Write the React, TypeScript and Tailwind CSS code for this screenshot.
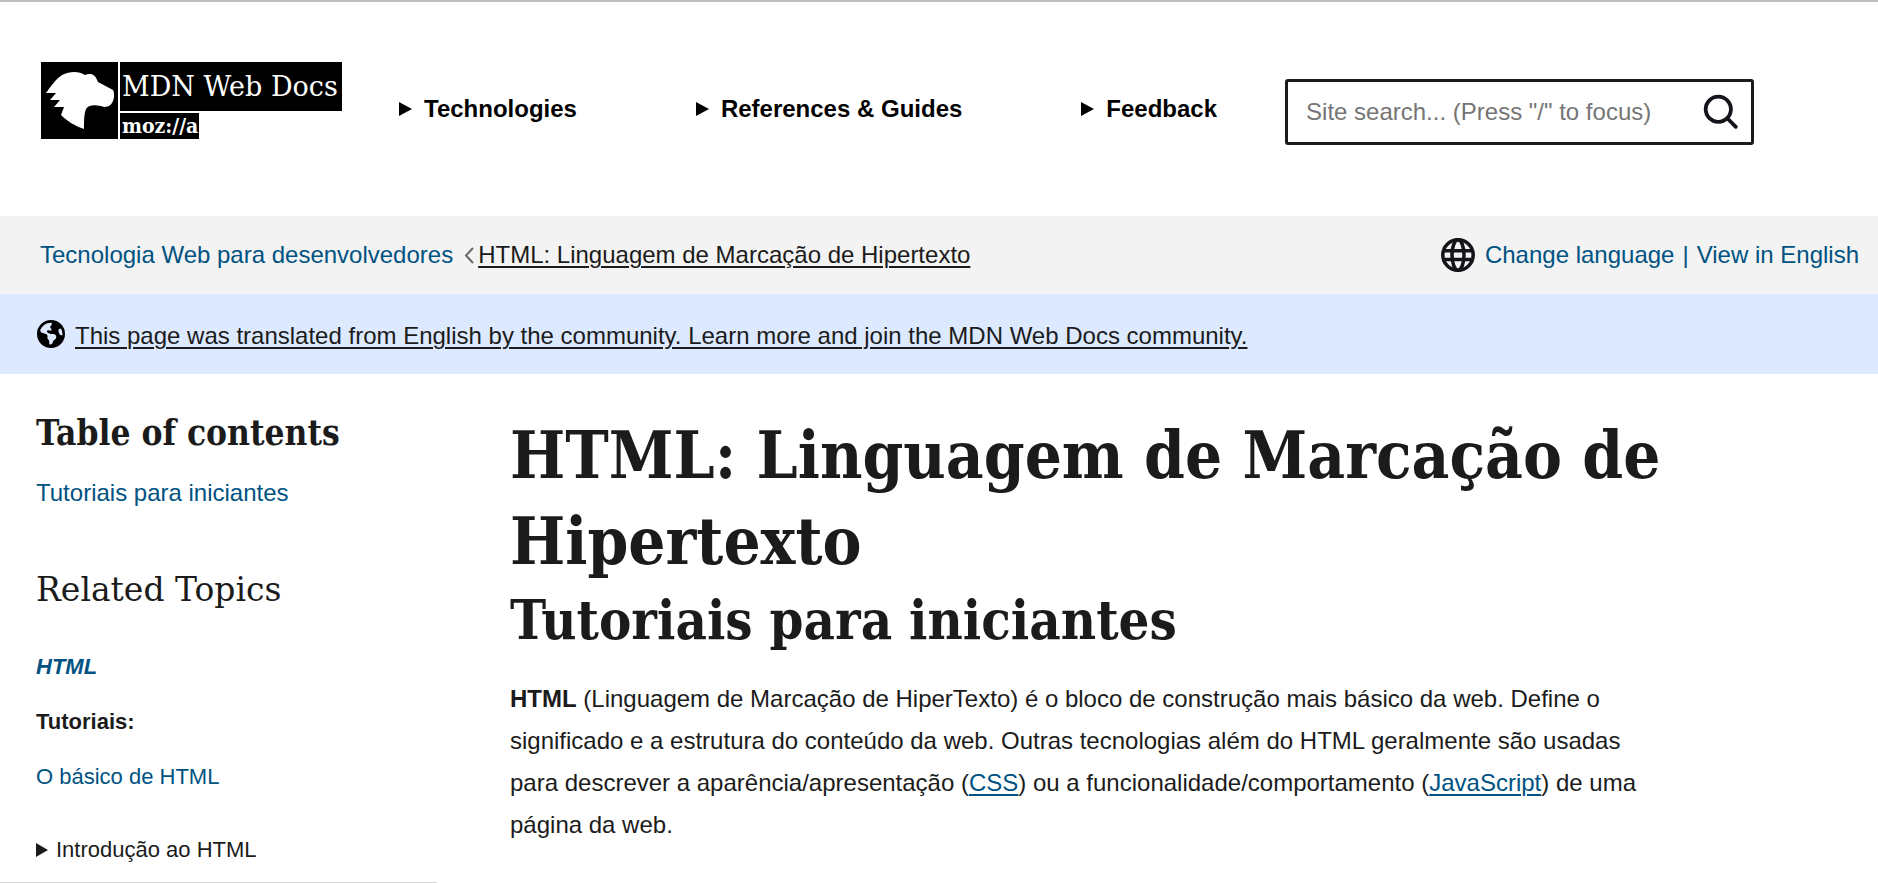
import { FaEarthAmericas } from "react-icons/fa6";

const link = "text-[#005282]";
const slab = "font-['DejaVu_Serif','Liberation_Serif',serif]";
const slabCondensed = "font-['DejaVu_Serif_Condensed','DejaVu_Serif',serif]";

function Logo() {
  return (
    <a href="#" aria-label="MDN Web Docs" className="flex w-[302px] shrink-0 gap-0.5">
      <svg viewBox="0 0 77 77" className="size-[77px] shrink-0 bg-black" aria-hidden="true">
        <path
          fill="#fff"
          d="M5 31C10 24 15 17 21 13C29 9 38 9 44 13C49 11 54 12 56 18L57 20C62 23 67 25 72 28C74 32 73 38 71 41C69 44 66 45 63 45C57 43 48 42 45 47C43 52 43 60 43 67C34 64 26 59 20 53L23 45H13L19 38H9L15 31Z"
        />
      </svg>
      <span className="flex flex-col items-start gap-0.5 text-white">
        <span className={"flex h-[49px] w-[222px] items-center bg-black px-0.5 text-[27px] whitespace-nowrap " + slab}>
          MDN Web Docs
        </span>
        <span className={"flex h-[26px] w-[79px] items-center bg-black px-0.5 text-[21px] font-bold " + slabCondensed}>
          moz://a
        </span>
      </span>
    </a>
  );
}

function MenuButton({ label }: { label: string }) {
  return (
    <button type="button" className="flex items-center gap-3 font-bold whitespace-nowrap text-black">
      <svg viewBox="0 0 13 14" className="h-3.5 w-[13px]" aria-hidden="true">
        <path d="M0 0L13 7L0 14Z" />
      </svg>
      {label}
    </button>
  );
}

export default function App() {
  return (
    <div className="min-h-screen border-t-2 border-[#bdbdbd] bg-white font-['Liberation_Sans',Arial,sans-serif] text-2xl text-[#1b1b1b]">
      <header className="flex h-[214px] items-start px-[41px] pt-[60px]">
        <Logo />
        <nav aria-label="Main" className="ml-14 flex h-[94px] items-center gap-[119px]">
          <MenuButton label="Technologies" />
          <MenuButton label="References & Guides" />
          <MenuButton label="Feedback" />
        </nav>
        <form
          role="search"
          className="mt-[17px] ml-[68px] flex h-[66px] w-[469px] items-center rounded-[3px] border-3 border-[#1b1b1b] pr-3 pl-[18px]"
        >
          <input
            type="search"
            aria-label="Site search"
            placeholder={'Site search... (Press "/" to focus)'}
            className="min-w-0 flex-1 outline-none placeholder:text-[#757575]"
          />
          <button type="submit" aria-label="Search">
            <svg viewBox="0 0 36 36" className="size-9" fill="none" stroke="#15141a" strokeWidth="3.8" strokeLinecap="round" aria-hidden="true">
              <circle cx="15.300" cy="15.300" r="12.600" />
              <path d="M24.500 24.500L32.800 32.800" />
            </svg>
          </button>
        </form>
      </header>

      <div className="flex h-[78px] items-center justify-between bg-[#f3f3f3] pr-[19px] pl-10 whitespace-nowrap">
        <nav aria-label="Breadcrumbs" className="flex items-center">
          <a href="#" className={link}>Tecnologia Web para desenvolvedores</a>
          <svg viewBox="0 0 10 17" className="mr-1 ml-[11px] h-[17px] w-2.5" fill="none" stroke="#696969" strokeWidth="2" aria-hidden="true">
            <path d="M9 1L2 8.500L9 16" />
          </svg>
          <a href="#" className="underline decoration-2 underline-offset-3">HTML: Linguagem de Marcação de Hipertexto</a>
        </nav>
        <div className={"flex items-center " + link}>
          <svg viewBox="0 0 34 34" className="mr-2.5 size-[34px]" fill="none" stroke="#15141a" strokeWidth="3.5" aria-hidden="true">
            <circle cx="17" cy="17" r="15.200" />
            <ellipse cx="17" cy="17" rx="6" ry="15.200" />
            <path d="M3 12.800H31M3 21.500H31" />
          </svg>
          <a href="#">Change language</a>
          <span className="mx-2">|</span>
          <a href="#">View in English</a>
        </div>
      </div>

      <div className="flex h-20 items-center gap-2.5 bg-[#dde9ff] px-[37px]">
        <FaEarthAmericas className="size-7 text-black" aria-hidden="true" />
        <a href="#" className="mt-1 underline decoration-2 underline-offset-3">
          This page was translated from English by the community. Learn more and join the MDN Web Docs community.
        </a>
      </div>

      <div className="flex">
        <aside className="w-[437px] shrink-0 border-b border-[#d4d4d4] pt-[37px] pl-9">
          <h2 className={"text-[35px] leading-[44px] font-bold " + slabCondensed}>Table of contents</h2>
          <a href="#" className={"mt-5 block leading-9 " + link}>Tutoriais para iniciantes</a>
          <h2 className={"mt-[57px] text-[33px] leading-[44px] " + slab}>Related Topics</h2>
          <div className="mt-[39px] flex flex-col gap-[23px] text-[22px] leading-8">
            <a href="#" className={"font-bold italic " + link}>HTML</a>
            <strong>Tutoriais:</strong>
            <a href="#" className={link}>O básico de HTML</a>
          </div>
          <button type="button" className="mt-[41px] mb-[16px] flex items-center gap-2 text-[22px] leading-8">
            <svg viewBox="0 0 12 14" className="h-3.5 w-3" fill="#1b1b1b" aria-hidden="true">
              <path d="M0 0L12 7L0 14Z" />
            </svg>
            Introdução ao HTML
          </button>
        </aside>
        <main className="min-w-0 flex-1 pt-[38px] pr-52 pl-[73px]">
          <h1 className={"text-[65px] leading-[86px] font-bold " + slabCondensed}>HTML: Linguagem de Marcação de Hipertexto</h1>
          <h2 className={"text-[54px] leading-[72px] font-bold " + slabCondensed}>Tutoriais para iniciantes</h2>
          <p className="mt-[22px] leading-[42px]">
            <strong>HTML</strong> (Linguagem de Marcação de HiperTexto) é o bloco de construção mais básico da web. Define o
            significado e a estrutura do conteúdo da web. Outras tecnologias além do HTML geralmente são usadas para
            descrever a aparência/apresentação (<a href="#" className="text-[#005282] underline decoration-2 underline-offset-3">CSS</a>) ou
            a funcionalidade/comportamento (<a href="#" className="text-[#005282] underline decoration-2 underline-offset-3">JavaScript</a>) de uma
            página da web.
          </p>
        </main>
      </div>
    </div>
  );
}
